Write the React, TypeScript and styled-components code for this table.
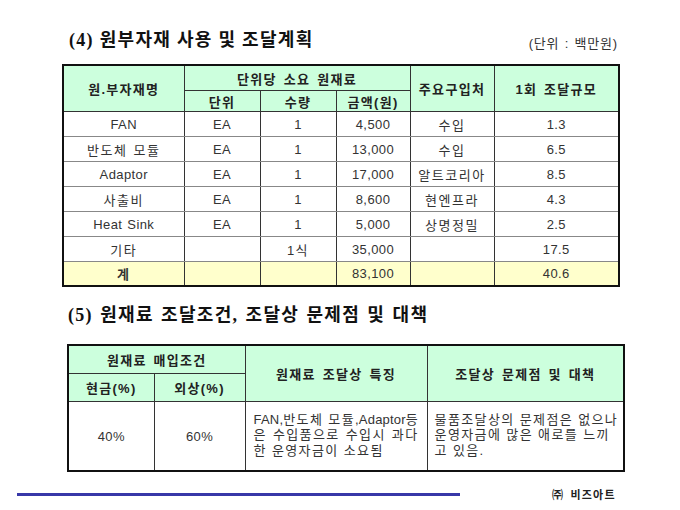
import React from 'react';
import styled, { createGlobalStyle } from 'styled-components';

const Global = createGlobalStyle`
  html, body { margin: 0; padding: 0; background: #fff; }
  body { font-family: "Liberation Sans", "Noto Sans CJK KR", sans-serif; }
`;

const Page = styled.div`
  width: 680px;
  height: 510px;
  box-sizing: border-box;
  padding-top: 29px;
  display: flex;
  flex-direction: column;
  align-items: flex-start;
  background: #fff;
  color: #222;
  overflow: hidden;
`;

const SectionHead = styled.div<{ $left: number; $width: number; $top: number }>`
  display: flex;
  justify-content: space-between;
  align-items: center;
  margin-left: ${(p) => p.$left}px;
  margin-top: ${(p) => p.$top}px;
  width: ${(p) => p.$width}px;
  height: 22px;
`;

const Title = styled.h2<{ $ws?: number }>`
  margin: 0;
  font-family: "Liberation Serif", "Noto Sans CJK KR", serif;
  font-weight: 700;
  font-size: 18px;
  line-height: 22px;
  letter-spacing: 1.3px;
  word-spacing: ${(p) => p.$ws ?? 0}px;
  color: #111;
  white-space: nowrap;
`;

const Unit = styled.span`
  font-size: 13px;
  letter-spacing: 0.8px;
  word-spacing: 1px;
  color: #333;
  padding-top: 4px;
  white-space: nowrap;
`;

const Table = styled.table<{ $left: number; $top: number }>`
  margin-left: ${(p) => p.$left}px;
  margin-top: ${(p) => p.$top}px;
  width: 556px;
  border-collapse: collapse;
  table-layout: fixed;
  border: 2px solid #111;
`;

const Th = styled.th<{ $h: number }>`
  height: ${(p) => p.$h}px;
  padding: 0;
  background: #ccffdd;
  border: 1px solid #333;
  font-weight: 700;
  font-size: 13px;
  letter-spacing: 1.3px;
  word-spacing: 2px;
  color: #222;
  text-align: center;
  vertical-align: middle;
`;

const Td = styled.td<{ $h: number; $total?: boolean; $bold?: boolean; $latin?: boolean }>`
  height: ${(p) => p.$h}px;
  padding: 0;
  background: ${(p) => (p.$total ? '#ffffcc' : '#fff')};
  border-left: 1px solid #333;
  border-right: 1px solid #333;
  border-top: 1px solid #888;
  border-bottom: 1px solid #888;
  font-size: 13px;
  font-weight: ${(p) => (p.$bold ? 700 : 400)};
  letter-spacing: ${(p) => (p.$latin ? 0.4 : 1.5)}px;
  word-spacing: 1px;
  color: #333;
  text-align: center;
  vertical-align: middle;
`;

const TextCell = styled.td<{ $pl: number; $pr: number }>`
  height: 66px;
  padding: 0 ${(p) => p.$pr}px 2px ${(p) => p.$pl}px;
  border: 1px solid #333;
  font-size: 13px;
  letter-spacing: 1.4px;
  color: #333;
  vertical-align: middle;
  text-align: left;
`;

const Latin = styled.span`
  letter-spacing: 0.2px;
`;

const Line = styled.div<{ $justify?: boolean }>`
  line-height: 15.5px;
  white-space: nowrap;
  text-align: ${(p) => (p.$justify ? 'justify' : 'left')};
  text-align-last: ${(p) => (p.$justify ? 'justify' : 'left')};
`;

const Footer = styled.div`
  margin-top: 16px;
  height: 12px;
  display: flex;
  align-items: center;
  padding-left: 17px;
`;

const Rule = styled.div`
  width: 443px;
  height: 3px;
  background: #3838a8;
`;

const Company = styled.span`
  margin-left: 92px;
  font-size: 11px;
  font-weight: 700;
  letter-spacing: 1.2px;
  word-spacing: 2px;
  color: #222;
`;

type Row = { name: string; unit: string; qty: string; amount: string; vendor: string; scale: string };

const rows: Row[] = [
  { name: 'FAN', unit: 'EA', qty: '1', amount: '4,500', vendor: '수입', scale: '1.3' },
  { name: '반도체 모듈', unit: 'EA', qty: '1', amount: '13,000', vendor: '수입', scale: '6.5' },
  { name: 'Adaptor', unit: 'EA', qty: '1', amount: '17,000', vendor: '알트코리아', scale: '8.5' },
  { name: '사출비', unit: 'EA', qty: '1', amount: '8,600', vendor: '현엔프라', scale: '4.3' },
  { name: 'Heat Sink', unit: 'EA', qty: '1', amount: '5,000', vendor: '상명정밀', scale: '2.5' },
  { name: '기타', unit: '', qty: '1식', amount: '35,000', vendor: '', scale: '17.5' },
];

const isLatin = (s: string) => /^[\x00-\x7f]*$/.test(s);

export default function App() {
  return (
    <>
      <Global />
      <Page>
        <SectionHead $left={69} $width={549} $top={0}>
          <Title>(4) 원부자재 사용 및 조달계획</Title>
          <Unit>(단위 : 백만원)</Unit>
        </SectionHead>

        <Table $left={62} $top={13}>
          <colgroup>
            <col style={{ width: 121 }} />
            <col style={{ width: 76 }} />
            <col style={{ width: 76 }} />
            <col style={{ width: 74 }} />
            <col style={{ width: 84 }} />
            <col style={{ width: 125 }} />
          </colgroup>
          <thead>
            <tr>
              <Th $h={24} rowSpan={2}>원.부자재명</Th>
              <Th $h={24} colSpan={3}>단위당 소요 원재료</Th>
              <Th $h={24} rowSpan={2}>주요구입처</Th>
              <Th $h={24} rowSpan={2}>1회 조달규모</Th>
            </tr>
            <tr>
              <Th $h={20}>단위</Th>
              <Th $h={20}>수량</Th>
              <Th $h={20}>금액(원)</Th>
            </tr>
          </thead>
          <tbody>
            {rows.map((r) => (
              <tr key={r.name}>
                <Td $h={24} $latin={isLatin(r.name)}>{r.name}</Td>
                <Td $h={24} $latin>{r.unit}</Td>
                <Td $h={24} $latin={isLatin(r.qty)}>{r.qty}</Td>
                <Td $h={24} $latin>{r.amount}</Td>
                <Td $h={24}>{r.vendor}</Td>
                <Td $h={24} $latin>{r.scale}</Td>
              </tr>
            ))}
            <tr>
              <Td $h={23} $total $bold>계</Td>
              <Td $h={23} $total></Td>
              <Td $h={23} $total></Td>
              <Td $h={23} $total $latin>83,100</Td>
              <Td $h={23} $total></Td>
              <Td $h={23} $total $latin>40.6</Td>
            </tr>
          </tbody>
        </Table>

        <SectionHead $left={68} $width={555} $top={17}>
          <Title $ws={1.5}>(5) 원재료 조달조건, 조달상 문제점 및 대책</Title>
        </SectionHead>

        <Table $left={67} $top={18}>
          <colgroup>
            <col style={{ width: 86 }} />
            <col style={{ width: 91 }} />
            <col style={{ width: 182 }} />
            <col style={{ width: 197 }} />
          </colgroup>
          <thead>
            <tr>
              <Th $h={27} colSpan={2}>원재료 매입조건</Th>
              <Th $h={27} rowSpan={2}>원재료 조달상 특징</Th>
              <Th $h={27} rowSpan={2}>조달상 문제점 및 대책</Th>
            </tr>
            <tr>
              <Th $h={27}>현금(%)</Th>
              <Th $h={27}>외상(%)</Th>
            </tr>
          </thead>
          <tbody>
            <tr>
              <Td $h={66} $latin>40%</Td>
              <Td $h={66} $latin>60%</Td>
              <TextCell $pl={8} $pr={8}>
                <Line $justify>
                  <Latin>FAN,</Latin>반도체 모듈<Latin>,Adaptor</Latin>등
                </Line>
                <Line $justify>은 수입품으로 수입시 과다</Line>
                <Line>한 운영자금이 소요됨</Line>
              </TextCell>
              <TextCell $pl={7} $pr={9}>
                <Line $justify>물품조달상의 문제점은 없으나</Line>
                <Line>운영자금에 많은 애로를 느끼</Line>
                <Line>고 있음.</Line>
              </TextCell>
            </tr>
          </tbody>
        </Table>

        <Footer>
          <Rule />
          <Company>㈜ 비즈아트</Company>
        </Footer>
      </Page>
    </>
  );
}
